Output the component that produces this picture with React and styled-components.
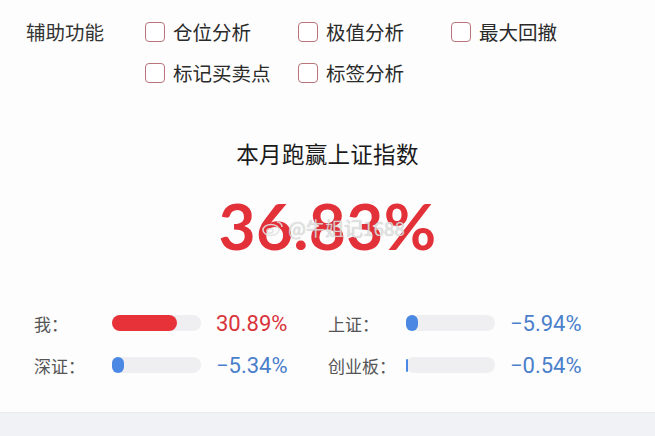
import React from 'react'
import styled, { createGlobalStyle } from 'styled-components'

const GlobalStyle = createGlobalStyle`
  html, body {
    margin: 0;
    padding: 0;
    background: #fdfdfd;
  }
  body {
    font-family: Roboto, "Noto Sans CJK SC", sans-serif;
    color: #222;
  }
`

const options = [
  ['仓位分析', '极值分析', '最大回撤'],
  ['标记买卖点', '标签分析'],
]

const stats = [
  { name: '我：', value: '30.89%', fill: 73, up: true },
  { name: '上证：', value: '−5.94%', fill: 14, up: false },
  { name: '深证：', value: '−5.34%', fill: 13, up: false },
  { name: '创业板：', value: '−0.54%', fill: 2, up: false },
]

const Page = styled.div`
  width: 655px;
  height: 436px;
  display: flex;
  flex-direction: column;
  overflow: hidden;
`

const Tools = styled.section`
  display: grid;
  grid-template-columns: 119px 153px 153px 153px;
  grid-auto-rows: 41px;
  padding: 11px 0 0 26px;
`

const ToolsTitle = styled.div`
  grid-row: 1;
  grid-column: 1;
  display: flex;
  align-items: center;
  font-family: "Noto Sans CJK SC", sans-serif;
  font-size: 19.5px;
  color: #333;
`

const Option = styled.label`
  display: flex;
  align-items: center;
  gap: 8px;
  font-family: "Noto Sans CJK SC", sans-serif;
  font-size: 19.5px;
  color: #2a2a2a;
  grid-column: ${(p) => p.col + 2};
  grid-row: ${(p) => p.row + 1};
`

const Box = styled.span`
  width: 18px;
  height: 18px;
  border: 1.5px solid #b8747a;
  border-radius: 4px;
  background: #fff;
  flex: none;
`

const Summary = styled.section`
  position: relative;
  display: flex;
  flex-direction: column;
  align-items: center;
  padding-top: 44px;
`

const Caption = styled.div`
  font-family: "Noto Sans CJK SC", sans-serif;
  font-size: 22.5px;
  color: #1a1a1a;
  letter-spacing: 0.3px;
`

const BigValue = styled.div`
  margin-top: 25px;
  font-family: Lato, sans-serif;
  font-weight: 700;
  font-size: 64px;
  line-height: 64px;
  color: #e3313a;
  letter-spacing: 0.3px;
`

const Mark = styled.div`
  position: absolute;
  left: 262px;
  top: 121px;
  display: flex;
  align-items: center;
  gap: 4px;
  font-family: "Noto Sans CJK SC", sans-serif;
  font-size: 19px;
  color: rgba(240, 240, 240, 0.75);
  text-shadow: 0 0 1px rgba(120, 120, 120, 0.6);
`

const Stats = styled.section`
  display: grid;
  grid-template-columns: 294px 294px;
  row-gap: 20px;
  padding: 54px 0 0 34px;
`

const Stat = styled.div`
  display: flex;
  align-items: center;
  height: 22px;
`

const StatName = styled.span`
  width: 78px;
  font-family: "Noto Sans CJK SC", sans-serif;
  font-size: 17px;
  color: #555;
`

const Track = styled.div`
  width: 89px;
  height: 16px;
  border-radius: 8px;
  background: #efeff1;
  display: flex;
  align-items: center;
`

const Fill = styled.div`
  height: ${(p) => (p.thin ? '13px' : '100%')};
  min-width: 2px;
  border-radius: ${(p) => (p.thin ? '1px' : '8px')};
  background: ${(p) => (p.up ? '#e8323a' : '#4a88e4')};
`

const StatValue = styled.span`
  margin-left: 15px;
  font-family: Roboto, sans-serif;
  font-size: 22px;
  color: ${(p) => (p.up ? '#d8343c' : '#4a7fcb')};
`

const Footer = styled.div`
  margin-top: auto;
  height: 23px;
  background: #f1f2f5;
  border-top: 1px solid #ebebec;
`

function WeiboIcon() {
  return (
    <svg width="22" height="18" viewBox="0 0 22 18" fill="none" stroke="rgba(225,225,225,0.9)" strokeWidth="1.6">
      <ellipse cx="9" cy="11" rx="8" ry="5.5" />
      <ellipse cx="8" cy="12" rx="3" ry="2.2" />
      <path d="M15 3a5 5 0 0 1 5 5" />
    </svg>
  )
}

export default function App() {
  return (
    <Page>
      <GlobalStyle />
      <Tools>
        <ToolsTitle>辅助功能</ToolsTitle>
        {options.map((row, r) =>
          row.map((text, c) => (
            <Option key={text} row={r} col={c}>
              <Box />
              {text}
            </Option>
          ))
        )}
      </Tools>
      <Summary>
        <Caption>本月跑赢上证指数</Caption>
        <BigValue>36.83%</BigValue>
        <Mark>
          <WeiboIcon />
          @牛姐记1688
        </Mark>
      </Summary>
      <Stats>
        {stats.map((s) => (
          <Stat key={s.name}>
            <StatName>{s.name}</StatName>
            <Track>
              <Fill up={s.up} thin={s.fill < 5} style={{ width: `${s.fill}%` }} />
            </Track>
            <StatValue up={s.up}>{s.value}</StatValue>
          </Stat>
        ))}
      </Stats>
      <Footer />
    </Page>
  )
}
